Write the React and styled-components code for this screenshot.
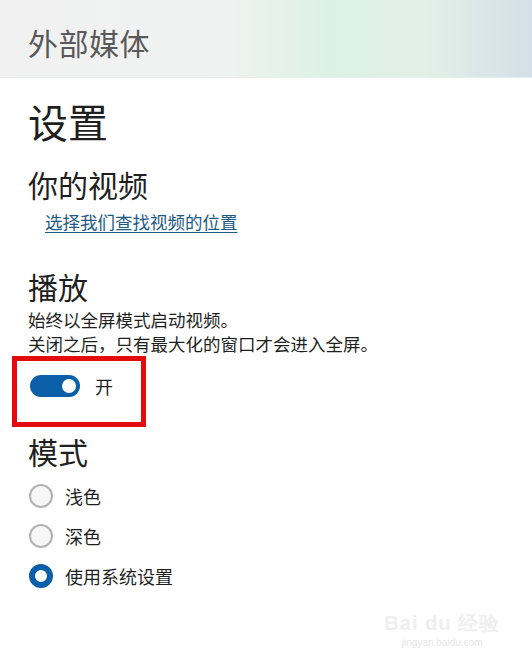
import React from 'react'
import styled, { createGlobalStyle } from 'styled-components'

const Global = createGlobalStyle`
  html, body { margin: 0; padding: 0; background: #fff; }
  body {
    font-family: "Microsoft YaHei", "Noto Sans CJK SC", "Liberation Sans", sans-serif;
    color: #1a1a1a;
  }
`

const Page = styled.div`
  position: relative;
  width: 532px;
  height: 658px;
  overflow: hidden;
  background: #fff;
`

const Header = styled.div`
  height: 77px;
  display: flex;
  align-items: center;
  padding: 0 0 0 28px;
  background: linear-gradient(90deg, #f1f1f1 0%, #f0f2f1 42%, #dcf1e6 62%, #e2f0e8 80%, #d4dfe7 100%);
  border-bottom: 1px solid #e9eeeb;
`

const AppTitle = styled.h1`
  margin: 7px 0 0;
  font-size: 30px;
  font-weight: 400;
  color: #595959;
  letter-spacing: 0.5px;
`

const Body = styled.div`
  padding: 15px 0 0 28px;
  display: flex;
  flex-direction: column;
`

const PageTitle = styled.h2`
  margin: 0;
  font-size: 40px;
  line-height: 56px;
  font-weight: 400;
  color: #1f1f1f;
`

const Section = styled.h3`
  margin: ${p => p.$top || 0}px 0 0;
  font-size: 30px;
  line-height: 40px;
  font-weight: 400;
  color: #1f1f1f;
`

const Link = styled.a`
  margin: 5px 0 0 17px;
  font-size: 17.5px;
  line-height: 26px;
  color: #1e5a86;
  text-decoration: underline;
  text-underline-offset: 3px;
  align-self: flex-start;
`

const Desc = styled.p`
  margin: ${p => p.$top || 0}px 0 0;
  font-size: 17.5px;
  line-height: 24px;
  color: #1f1f1f;
`

const Highlight = styled.div`
  margin: 0 0 0 -16px;
  width: 111px;
  height: 50px;
  border: 5px solid #e40b0b;
  display: flex;
  align-items: center;
  padding: 0 0 11px 13px;
  gap: 15px;
  box-sizing: content-box;
`

const Toggle = styled.div`
  width: 50px;
  height: 22px;
  border-radius: 11px;
  background: #0b5ea8;
  display: flex;
  align-items: center;
  justify-content: flex-end;
  padding-right: 4px;
  box-sizing: border-box;
`

const Knob = styled.div`
  width: 14px;
  height: 14px;
  border-radius: 50%;
  background: #fff;
`

const ToggleLabel = styled.span`
  font-size: 18px;
  color: #1f1f1f;
`

const RadioList = styled.div`
  display: flex;
  flex-direction: column;
  gap: 16px;
  margin-top: 13px;
`

const RadioRow = styled.label`
  display: flex;
  align-items: center;
  gap: 12px;
  font-size: 18px;
  line-height: 24px;
  color: #1f1f1f;
`

const Circle = styled.span`
  width: 24px;
  height: 24px;
  border-radius: 50%;
  box-sizing: border-box;
  margin-left: 1px;
  border: ${p => (p.$on ? '6px solid #0b5ea8' : '2px solid #b3b3b3')};
  background: ${p => (p.$on ? '#fff' : '#f6f6f6')};
`

const Watermark = styled.div`
  position: absolute;
  right: 32px;
  bottom: 10px;
  display: flex;
  flex-direction: column;
  align-items: center;
  color: #efefef;
  font-family: "Liberation Sans", sans-serif;
`

const WmTop = styled.div`
  font-size: 20px;
  font-weight: 700;
  letter-spacing: 1px;
`

const WmBottom = styled.div`
  font-size: 10px;
  color: #e6e6e6;
`

export default function App() {
  const modes = [
    { label: '浅色', on: false },
    { label: '深色', on: false },
    { label: '使用系统设置', on: true },
  ]
  return (
    <Page>
      <Global />
      <Header>
        <AppTitle>外部媒体</AppTitle>
      </Header>
      <Body>
        <PageTitle>设置</PageTitle>
        <Section $top={15}>你的视频</Section>
        <Link href="#">选择我们查找视频的位置</Link>
        <Section $top={31}>播放</Section>
        <Desc $top={2}>始终以全屏模式启动视频。</Desc>
        <Desc>关闭之后，只有最大化的窗口才会进入全屏。</Desc>
        <Highlight>
          <Toggle>
            <Knob />
          </Toggle>
          <ToggleLabel>开</ToggleLabel>
        </Highlight>
        <Section $top={4}>模式</Section>
        <RadioList>
          {modes.map(m => (
            <RadioRow key={m.label}>
              <Circle $on={m.on} />
              {m.label}
            </RadioRow>
          ))}
        </RadioList>
      </Body>
      <Watermark>
        <WmTop>Bai du 经验</WmTop>
        <WmBottom>jingyan.baidu.com</WmBottom>
      </Watermark>
    </Page>
  )
}
